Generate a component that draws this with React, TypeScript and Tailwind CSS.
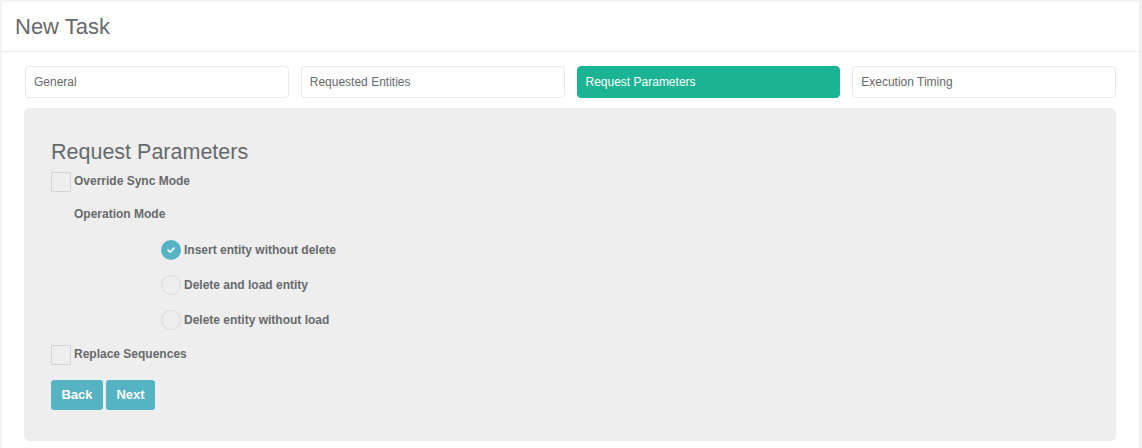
export default function App() {
  const tabs = ['General', 'Requested Entities', 'Request Parameters', 'Execution Timing']
  const options = ['Insert entity without delete', 'Delete and load entity', 'Delete entity without load']

  return (
    <div className="w-[1142px] h-[448px] bg-[#f3f3f4] pt-[2px] px-[2px] font-['Liberation_Sans',Arial,sans-serif] text-[#676a6c]">
      <div className="bg-white h-full w-[1138px] border-r border-[#e7eaec]">
        <div className="h-[50px] border-b border-[#e7eaec] px-[13px] flex items-center">
          <h1 className="text-[22px] text-[#676a6c] leading-none pt-[1px]">New Task</h1>
        </div>

        <div className="px-[22px] pt-[14px]">
          <div className="grid grid-cols-4 gap-x-[12px] w-[1092px] pl-[1px]">
            {tabs.map((tab, i) => (
              <div
                key={i}
                className={
                  i === 2
                    ? 'h-[32px] rounded-[4px] bg-[#1ab394] text-white text-[12px] flex items-center px-[8px] border border-[#1ab394]'
                    : 'h-[32px] rounded-[4px] bg-white text-[#676a6c] text-[12px] flex items-center px-[8px] border border-[#e7eaec]'
                }
              >
                {tab}
              </div>
            ))}
          </div>

          <div className="mt-[10px] w-[1092px] h-[333px] bg-[#eeeeee] rounded-[5px] px-[27px] pt-[32px]">
            <h2 className="text-[21.5px] leading-[24px] text-[#676a6c] mb-[8px]">Request Parameters</h2>

            <div className="flex items-start gap-[3px]">
              <span className="w-[20px] h-[20px] border border-[#d6d4ce] bg-[#eeeeee] shrink-0" />
              <span className="text-[12px] font-bold leading-none pt-[3px]">Override Sync Mode</span>
            </div>

            <div className="pl-[23px] mt-[16px] text-[12px] font-bold leading-none">Operation Mode</div>

            <div className="pl-[110px] mt-[20px] flex flex-col gap-[15px]">
              {options.map((opt, i) => (
                <div key={i} className="flex items-center gap-[3px] h-[20px]">
                  {i === 0 ? (
                    <span className="w-[20px] h-[20px] rounded-full bg-[#55b3c4] flex items-center justify-center shrink-0">
                      <svg width="10" height="10" viewBox="0 0 10 10" fill="none">
                        <path d="M2 5.2 L4.1 7.2 L8 3" stroke="white" strokeWidth="1.6" strokeLinecap="round" strokeLinejoin="round" />
                      </svg>
                    </span>
                  ) : (
                    <span className="w-[20px] h-[20px] rounded-full border border-[#dcdad4] shrink-0" />
                  )}
                  <span className="text-[12px] font-bold leading-none">{opt}</span>
                </div>
              ))}
            </div>

            <div className="flex items-start gap-[3px] mt-[15px]">
              <span className="w-[20px] h-[20px] border border-[#d6d4ce] bg-[#eeeeee] shrink-0" />
              <span className="text-[12px] font-bold leading-none pt-[3px]">Replace Sequences</span>
            </div>

            <div className="flex gap-[3px] mt-[15px]">
              <button className="h-[30px] w-[52px] rounded-[3px] bg-[#55b3c4] text-white text-[13px] font-bold">Back</button>
              <button className="h-[30px] w-[49px] rounded-[3px] bg-[#55b3c4] text-white text-[13px] font-bold">Next</button>
            </div>
          </div>
        </div>
      </div>
    </div>
  )
}
